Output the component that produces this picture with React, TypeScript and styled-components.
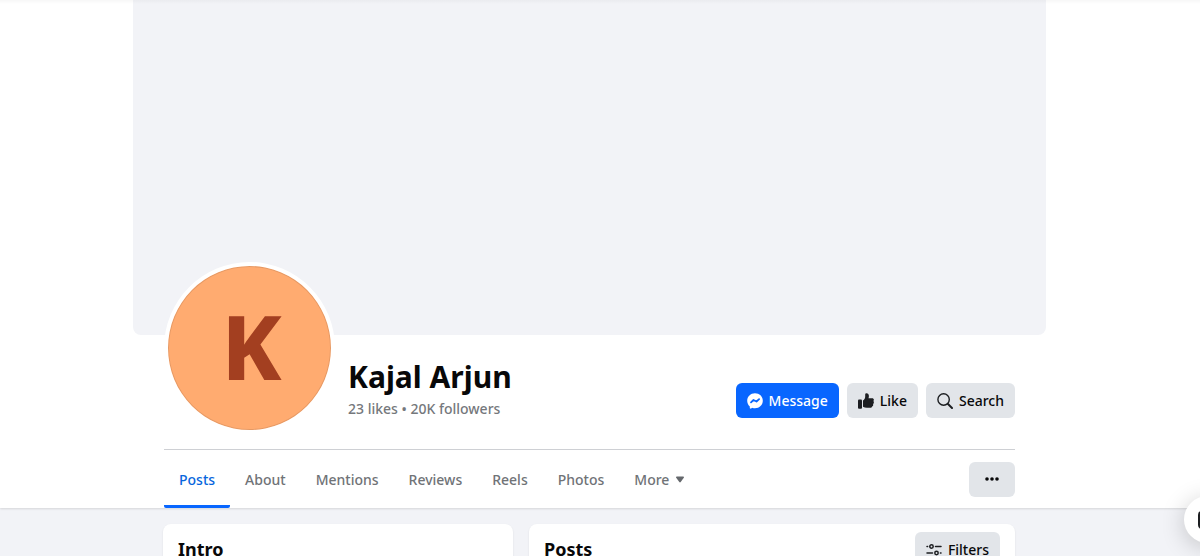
import React from 'react';
import styled, { createGlobalStyle } from 'styled-components';

const GlobalStyle = createGlobalStyle`
  * { box-sizing: border-box; }
  body {
    margin: 0;
    background: #f2f3f7;
    color: #080809;
    font-family: 'Noto Sans', 'Open Sans', sans-serif;
  }
  button { font-family: inherit; border: 0; cursor: pointer; }
  h1, h2, p { margin: 0; }
`;

const Page = styled.div`
  position: relative;
  height: 100vh;
  overflow: hidden;
`;

const TopShade = styled.div`
  position: absolute;
  inset: 0 0 auto 0;
  height: 4px;
  background: linear-gradient(rgba(0, 0, 0, 0.03), rgba(0, 0, 0, 0));
`;

const Header = styled.header`
  padding-right: 21px;
  background: #fff;
  box-shadow: 0 1px 2px rgba(0, 0, 0, 0.12);
`;

const Cover = styled.div`
  max-width: 913px;
  height: 335px;
  margin: 0 auto;
  border-radius: 0 0 8px 8px;
  background: #f2f3f7;
`;

const Container = styled.div`
  max-width: 851px;
  margin: 0 auto;
`;

const Identity = styled.div`
  display: flex;
  align-items: flex-end;
  margin-top: -73px;
  padding-bottom: 15px;
`;

const Avatar = styled.div`
  display: flex;
  align-items: center;
  justify-content: center;
  flex: none;
  width: 171px;
  height: 172px;
  padding: 0 0 4px 4px;
  border: 4px solid #fff;
  border-radius: 50%;
  background: #ffab70;
  box-shadow: inset 0 0 0 1px rgba(0, 0, 0, 0.1);
  color: #a33f20;
  font-size: 89px;
  line-height: 120px;
  font-weight: 800;
`;

const NameBlock = styled.div`
  flex: 1;
  padding: 0 0 13px 13px;
`;

const Name = styled.h1`
  font-size: 30px;
  line-height: 40px;
  font-weight: 700;
`;

const Stats = styled.p`
  font-size: 14px;
  line-height: 24px;
  font-weight: 500;
  color: #75787c;
`;

const Actions = styled.div`
  display: flex;
  gap: 8px;
  padding-bottom: 16px;
`;

const Button = styled.button<{ $primary?: boolean }>`
  display: flex;
  align-items: center;
  justify-content: center;
  gap: 6px;
  height: 35px;
  padding: 0 11px;
  border-radius: 6px;
  background: ${(p) => (p.$primary ? '#0866ff' : '#e2e5e9')};
  color: ${(p) => (p.$primary ? '#fff' : '#080809')};
  font-size: 14px;
  line-height: 20px;
  font-weight: 500;
  svg { flex: none; }
`;

const MoreActions = styled(Button)`
  width: 46px;
`;

const TabBar = styled.nav`
  display: flex;
  align-items: center;
  height: 59px;
  border-top: 1px solid #ced0d4;
`;

const Tabs = styled.div`
  display: flex;
  flex: 1;
  height: 100%;
`;

const Tab = styled.a<{ $active?: boolean }>`
  display: flex;
  align-items: center;
  gap: 7px;
  padding: 4px 15px 0;
  border-bottom: 3px solid ${(p) => (p.$active ? '#0866ff' : 'transparent')};
  border-radius: 2px;
  color: ${(p) => (p.$active ? '#0866dd' : '#707377')};
  font-size: 14px;
  line-height: 20px;
  font-weight: 500;
  text-decoration: none;
`;

const Main = styled.main`
  padding: 16px 22px 0 0;
`;

const Columns = styled.div`
  display: grid;
  grid-template-columns: 350fr 486fr;
  gap: 16px;
  max-width: 852px;
  margin: 0 auto;
`;

const Card = styled.section`
  display: flex;
  align-items: flex-start;
  justify-content: space-between;
  min-height: 120px;
  padding: 8px 15px;
  border-radius: 8px;
  background: #fff;
  box-shadow: 0 1px 2px rgba(0, 0, 0, 0.1);
`;

const CardTitle = styled.h2`
  padding-top: 5px;
  font-size: 18px;
  line-height: 24px;
  font-weight: 700;
`;

const Floating = styled.button`
  position: absolute;
  right: -31px;
  bottom: 13px;
  display: flex;
  align-items: center;
  width: 47px;
  height: 47px;
  padding: 0 14px;
  border-radius: 50%;
  background: #fff;
  box-shadow: 0 4px 24px rgba(0, 0, 0, 0.2);
`;

const tabs = ['Posts', 'About', 'Mentions', 'Reviews', 'Reels', 'Photos'];

const MessengerIcon = () => (
  <svg width="16" height="16" viewBox="0 0 16 16" aria-hidden="true">
    <path fill="#fff" d="M8 .3C3.600.3.2 3.500.2 7.700c0 2.200.9 4.200 2.400 5.500.2.200.2.300.2.500v1.400c.1.500.5.700.9.500l1.600-.7c.2-.1.300-.1.500 0 .7.200 1.400.3 2.200.3 4.400 0 7.800-3.200 7.800-7.500S12.400.3 8 .3z" />
    <path fill="none" stroke="#0866ff" strokeWidth="1.800" strokeLinecap="round" strokeLinejoin="round" d="M4 9.300l2.500-2.300 3 1.500 2.600-2.300" />
  </svg>
);

const LikeIcon = () => (
  <svg width="16" height="16" viewBox="0 0 16 16" fill="#1c1e21" aria-hidden="true">
    <rect x="0" y="6.500" width="4" height="9.300" rx="1" />
    <path d="M5 7.500C6.500 6.600 7.200 5.200 7.200 3.500V1.400C7.200.6 7.800.2 8.500.2c1.500 0 2.400 1.200 2.400 2.700 0 1-.2 1.700-.4 2.300h3.600c1 0 1.800.7 1.800 1.600 0 .6-.3 1-.6 1.300.4.300.6.8.6 1.400 0 .7-.4 1.200-.9 1.500.2.300.2.600.2.900 0 .8-.5 1.300-1.100 1.500-.1.900-.9 1.300-1.900 1.300H8.800c-1.400 0-2.600-.3-3.800-.9z" />
  </svg>
);

const SearchIcon = () => (
  <svg width="16" height="16" viewBox="0 0 16 16" fill="none" stroke="#1c1e21" strokeLinecap="round" aria-hidden="true">
    <circle cx="6.600" cy="6.500" r="5.700" strokeWidth="1.400" />
    <path strokeWidth="2" d="M11 11l4 4" />
  </svg>
);

const FiltersIcon = () => (
  <svg width="16" height="16" viewBox="0 0 16 16" fill="none" stroke="#1c1e21" strokeWidth="1.500" strokeLinecap="round" aria-hidden="true">
    <circle cx="5.500" cy="4.500" r="1.700" />
    <path d="M1 4.500h.6M9.500 4.500h5.500M1 11h5.500M14.400 11h.6" />
    <circle cx="10.500" cy="11" r="1.700" />
  </svg>
);

const DotsIcon = () => (
  <svg width="14" height="4" viewBox="0 0 14 4" fill="#080809" aria-hidden="true">
    <circle cx="2" cy="2" r="1.800" />
    <circle cx="7" cy="2" r="1.800" />
    <circle cx="12" cy="2" r="1.800" />
  </svg>
);

const CaretIcon = () => (
  <svg width="8" height="7" viewBox="0 0 8 7" fill="#65686c" aria-hidden="true">
    <path d="M.8.500h6.400c.7 0 1 .6.600 1.200L4.700 6c-.4.500-1 .5-1.400 0L.2 1.700C-.2 1.100.1.500.8.500z" />
  </svg>
);

const ComposeIcon = () => (
  <svg width="19" height="19" viewBox="0 0 19 19" fill="none" stroke="#1c1e21" strokeWidth="2" aria-hidden="true">
    <path d="M10 2H4a3 3 0 0 0-3 3v10a3 3 0 0 0 3 3h10a3 3 0 0 0 3-3V9M8 11l9-9" />
  </svg>
);

export default function App() {
  return (
    <Page>
      <GlobalStyle />
      <Header>
        <Cover />
        <Container>
          <Identity>
            <Avatar>K</Avatar>
            <NameBlock>
              <Name>Kajal Arjun</Name>
              <Stats>23 likes • 20K followers</Stats>
            </NameBlock>
            <Actions>
              <Button $primary><MessengerIcon />Message</Button>
              <Button><LikeIcon />Like</Button>
              <Button><SearchIcon />Search</Button>
            </Actions>
          </Identity>
          <TabBar>
            <Tabs>
              {tabs.map((label) => (
                <Tab key={label} href={`#${label.toLowerCase()}`} $active={label === 'Posts'}>
                  {label}
                </Tab>
              ))}
              <Tab href="#more">More<CaretIcon /></Tab>
            </Tabs>
            <MoreActions aria-label="More actions"><DotsIcon /></MoreActions>
          </TabBar>
        </Container>
      </Header>
      <Main>
        <Columns>
          <Card>
            <CardTitle>Intro</CardTitle>
          </Card>
          <Card>
            <CardTitle>Posts</CardTitle>
            <Button><FiltersIcon />Filters</Button>
          </Card>
        </Columns>
      </Main>
      <TopShade />
      <Floating aria-label="New message"><ComposeIcon /></Floating>
    </Page>
  );
}
